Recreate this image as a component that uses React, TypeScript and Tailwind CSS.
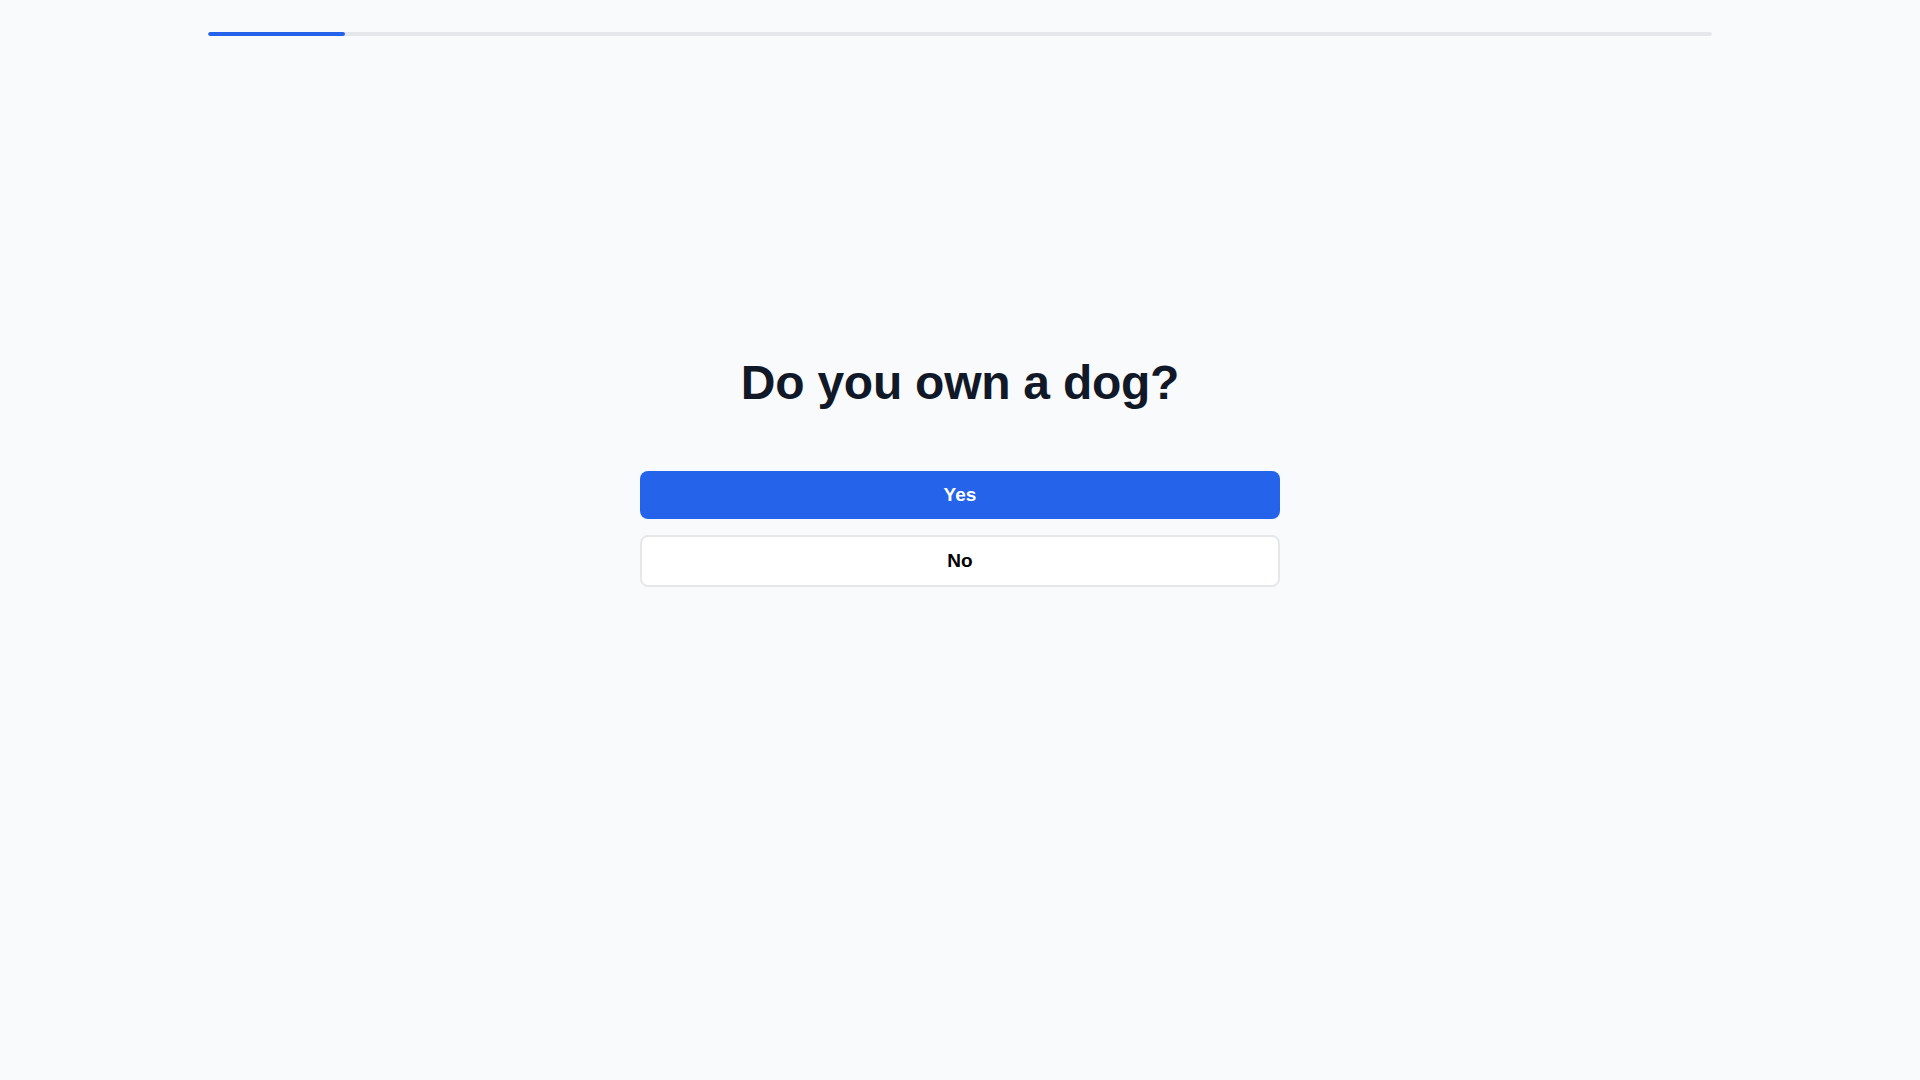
export default function App() {
  const step = 1
  const total = 11

  return (
    <div className="min-h-screen bg-[#f9fafb] font-['Liberation_Sans',Arial,sans-serif]">
      {/* Progress */}
      <div className="px-[208px] pt-8">
        <div className="h-1 w-full rounded-full bg-[#e5e7eb] overflow-hidden">
          <div className="h-full rounded-full bg-[#2563eb]" style={{ width: `${(step / total) * 100}%` }} />
        </div>
      </div>

      {/* Question */}
      <div className="flex flex-col items-center pt-[323px]">
        <h1 className="text-5xl leading-none font-bold text-[#111827] tracking-[-0.25px] mb-[64px]">Do you own a dog?</h1>
        <div className="w-[640px] flex flex-col gap-4">
          <button className="w-full rounded-lg bg-[#2563eb] py-2.5 text-[19px] leading-7 font-semibold text-white">Yes</button>
          <button className="w-full rounded-lg border-2 border-[#e5e7eb] bg-white py-2.5 text-[19px] leading-7 font-semibold text-black">No</button>
        </div>
      </div>
    </div>
  )
}
